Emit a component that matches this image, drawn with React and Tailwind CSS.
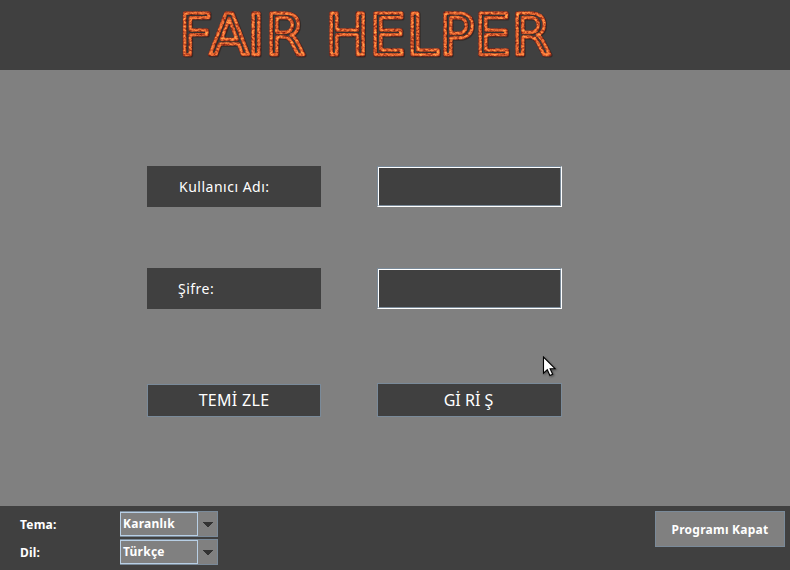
import React from "react";

const TITLE_X = "179 209.5 247.5 265.5 305 325.5 369.5 406.5 439.5 474.5 511.5";

function Title() {
  return (
    <svg width="790" height="70" viewBox="0 0 790 70" className="block">
      <defs>
        <filter id="lava" x="0" y="0" width="790" height="70" filterUnits="userSpaceOnUse" colorInterpolationFilters="sRGB">
          <feTurbulence type="fractalNoise" baseFrequency="0.35 0.5" numOctaves="2" seed="7" result="n" />
          <feColorMatrix in="n" type="matrix" values="0.55 0 0 0 0.2  1 0 0 0 -0.02  0.9 0 0 0 0.03  0 0 0 0 1" result="grain" />
          <feGaussianBlur in="SourceAlpha" stdDeviation="0.9" result="soft" />
          <feColorMatrix in="soft" type="matrix" values="0 0 0 0.85 0.2  0 0 0 0.62 -0.11  0 0 0 0.26 -0.02  0 0 0 0 1" result="relief" />
          <feComposite in="grain" in2="relief" operator="arithmetic" k1="2" k2="0" k3="0" k4="0" result="lit" />
          <feComposite in="lit" in2="SourceAlpha" operator="in" result="t" />
          <feDropShadow in="t" dx="0.8" dy="0.8" stdDeviation="0.7" floodColor="#1c0d08" floodOpacity="0.5" />
        </filter>
      </defs>
      <text
        x={TITLE_X}
        y="55.3"
        fill="none"
        stroke="#d9571c"
        strokeWidth="3.7"
        strokeLinejoin="round"
        filter="url(#lava)"
        className="font-['DejaVu_Sans'] text-[57.6px]"
      >
        FAIR HELPER
      </text>
    </svg>
  );
}

function FieldLabel({ children, className }) {
  return <div className={`flex h-[41px] w-[174px] items-center bg-[#404040] text-sm tracking-[0.5px] ${className}`}>{children}</div>;
}

function Field() {
  return (
    <div className="h-[41px] w-[185px] border border-t-[#7a8a99] border-r-white border-b-white border-l-[#7a8a99]">
      <div className="h-full border border-t-white border-r-[#7a8a99] border-b-[#7a8a99] border-l-white bg-[#404040]" />
    </div>
  );
}

function Combo({ value }) {
  return (
    <div className="flex h-[26px] w-[98px] border border-[#7a8a99] bg-[#808080]">
      <div className="-ml-px w-[78px] border border-[#b8cfe5] pl-0.5 leading-[22px] tracking-[0.25px]">{value}</div>
      <svg width="19" height="24" viewBox="0 0 19 24" className="shrink-0" shapeRendering="crispEdges">
        <path d="M4 10h11l-5.5 5.5z" fill="#333" />
      </svg>
    </div>
  );
}

export default function App() {
  return (
    <div className="relative flex h-[570px] w-[790px] flex-col overflow-hidden bg-[#808080] font-['Noto_Sans',sans-serif] text-white">
      <header className="h-[70px] bg-[#404040]">
        <Title />
      </header>
      <main className="h-[436px] pt-24 pl-[147px]">
        <div className="flex gap-14">
          <FieldLabel className="pl-8">Kullanıcı Adı:</FieldLabel>
          <Field />
        </div>
        <div className="mt-[61px] flex gap-14">
          <FieldLabel className="pl-[31px]">Şifre:</FieldLabel>
          <Field />
        </div>
        <div className="mt-[74px] flex items-end gap-14">
          <button className="h-[33px] w-[174px] border border-[#7a8a99] bg-[#404040] leading-[31px] tracking-[0.3px]">TEMİ ZLE</button>
          <button className="h-[34px] w-[185px] border border-[#7a8a99] bg-[#404040] pr-0.5 leading-8">Gİ Rİ Ş</button>
        </div>
      </main>
      <footer className="flex h-16 bg-[#404040] pt-[5px] text-xs font-bold">
        <div className="flex flex-col gap-0.5 pl-5">
          <div className="flex">
            <span className="w-[100px] leading-7 tracking-[0.2px]">Tema:</span>
            <Combo value="Karanlık" />
          </div>
          <div className="-mt-0.5 flex">
            <span className="w-[100px] leading-7 tracking-[0.2px]">Dil:</span>
            <Combo value="Türkçe" />
          </div>
        </div>
        <button className="mr-[5px] ml-auto h-9 w-[130px] border border-[#7a8a99] bg-[#808080] pt-0.5 tracking-[0.25px]">Programı Kapat</button>
      </footer>
      <svg width="16" height="24" viewBox="0 0 16 24" className="absolute top-[356px] left-[542px] drop-shadow-[1px_1px_1px_rgba(0,0,0,0.4)]">
        <path d="M1.5 1v16.2l3.8-3.5 2.6 5.8 2.8-1.2-2.6-5.6h5z" fill="#fff" stroke="#000" strokeWidth="1.1" />
      </svg>
    </div>
  );
}
